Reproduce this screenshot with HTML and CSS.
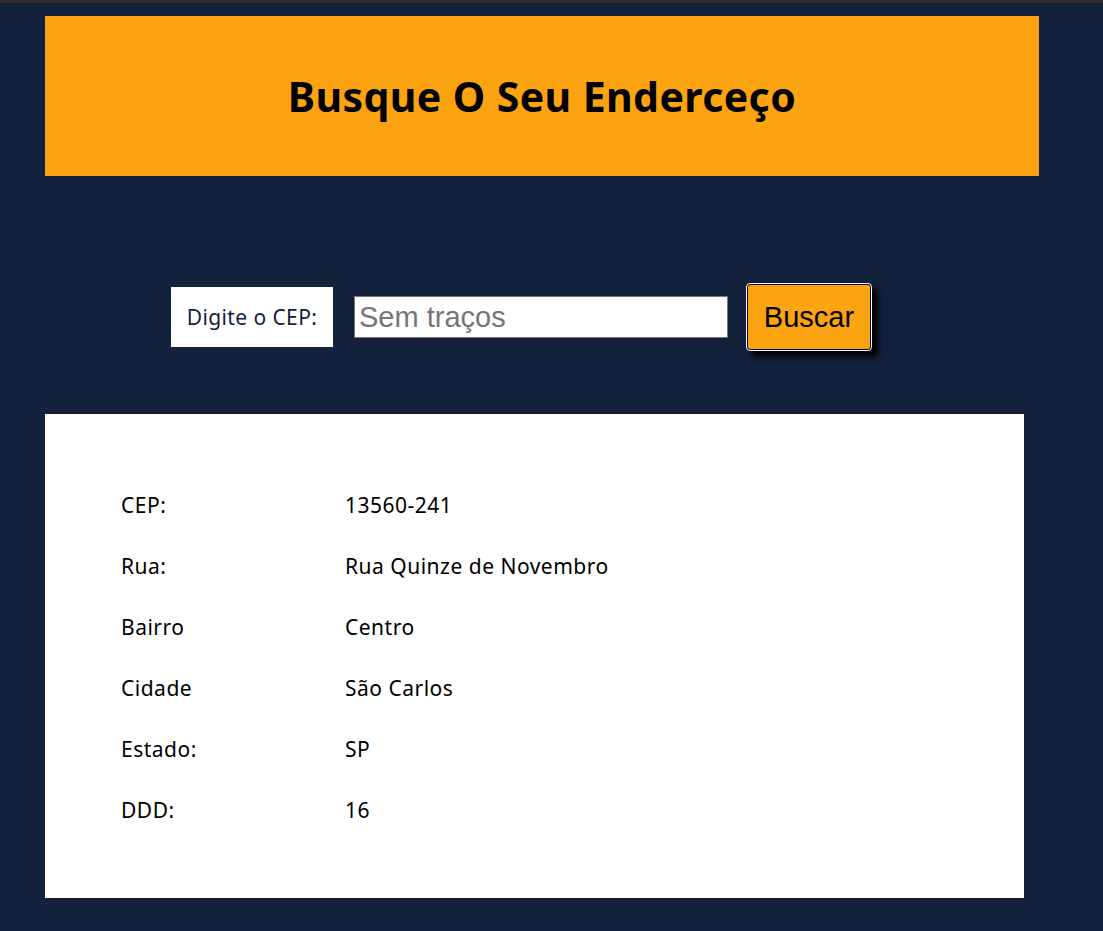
FILE: index.html
```html
<!DOCTYPE html>
<html lang="pt-BR">
<head>
<meta charset="utf-8">
<title>Busque O Seu Enderceço</title>
<link rel="stylesheet" href="styles.css">
</head>
<body>
<div class="topbar"></div>
<main class="page">
  <header class="hero">
    <h1 class="hero-title">Busque O Seu Enderceço</h1>
  </header>
  <form class="search" onsubmit="return false;">
    <label class="search-label" for="cep">Digite o CEP:</label>
    <input class="search-input" id="cep" type="text" placeholder="Sem traços">
    <button class="search-btn" type="submit">Buscar</button>
  </form>
  <section class="result">
    <div class="row"><span class="key">CEP:</span><span class="val">13560-241</span></div>
    <div class="row"><span class="key">Rua:</span><span class="val">Rua Quinze de Novembro</span></div>
    <div class="row"><span class="key">Bairro</span><span class="val">Centro</span></div>
    <div class="row"><span class="key">Cidade</span><span class="val">São Carlos</span></div>
    <div class="row"><span class="key">Estado:</span><span class="val">SP</span></div>
    <div class="row"><span class="key">DDD:</span><span class="val">16</span></div>
  </section>
</main>
</body>
</html>
```
FILE: styles.css
```css
* { box-sizing: border-box; }
html, body {
  margin: 0;
  padding: 0;
  background: #14213d;
  min-height: 100%;
}
body {
  font-family: "Noto Sans", "Open Sans", sans-serif;
  height: 931px;
  overflow: hidden;
}
.topbar {
  height: 3px;
  background: #2b2b2b;
}
.page {
  padding: 13px 0 0 45px;
}
.hero {
  width: 994px;
  height: 160px;
  background: #fca311;
  display: flex;
  align-items: center;
  justify-content: center;
}
.hero-title {
  margin: 0;
  font-size: 41px;
  font-weight: 700;
  color: #000;
  letter-spacing: 0.4px;
}
.search {
  display: flex;
  align-items: center;
  margin: 108px 0 64px 126px;
  height: 66px;
}
.search-label {
  width: 162px;
  height: 60px;
  background: #fff;
  color: #14213d;
  font-size: 21px;
  display: flex;
  align-items: center;
  justify-content: center;
  letter-spacing: 0.4px;
}
.search-input {
  margin-left: 21px;
  width: 374px;
  height: 42px;
  border: 1px solid #767676;
  padding: 0 4px;
  font-family: "Liberation Sans", Arial, sans-serif;
  font-size: 29px;
  color: #000;
  background: #fff;
  outline: none;
}
.search-input::placeholder { color: #757575; }
.search-btn {
  margin-left: 19px;
  width: 124px;
  height: 66px;
  background: #fca311;
  border: 1px solid #000;
  outline: 1px solid #fff;
  border-radius: 3px;
  box-shadow: 6px 6px 6px 1px #000;
  font-family: "Liberation Sans", Arial, sans-serif;
  font-size: 29px;
  color: #000;
  padding: 0;
  cursor: pointer;
}
.result {
  width: 979px;
  height: 484px;
  background: #fff;
  padding: 60px 0 0 76px;
}
.row {
  display: grid;
  grid-template-columns: 224px 1fr;
  height: 61px;
  align-items: center;
  font-size: 21px;
  color: #000;
  letter-spacing: 0.5px;
}
```
